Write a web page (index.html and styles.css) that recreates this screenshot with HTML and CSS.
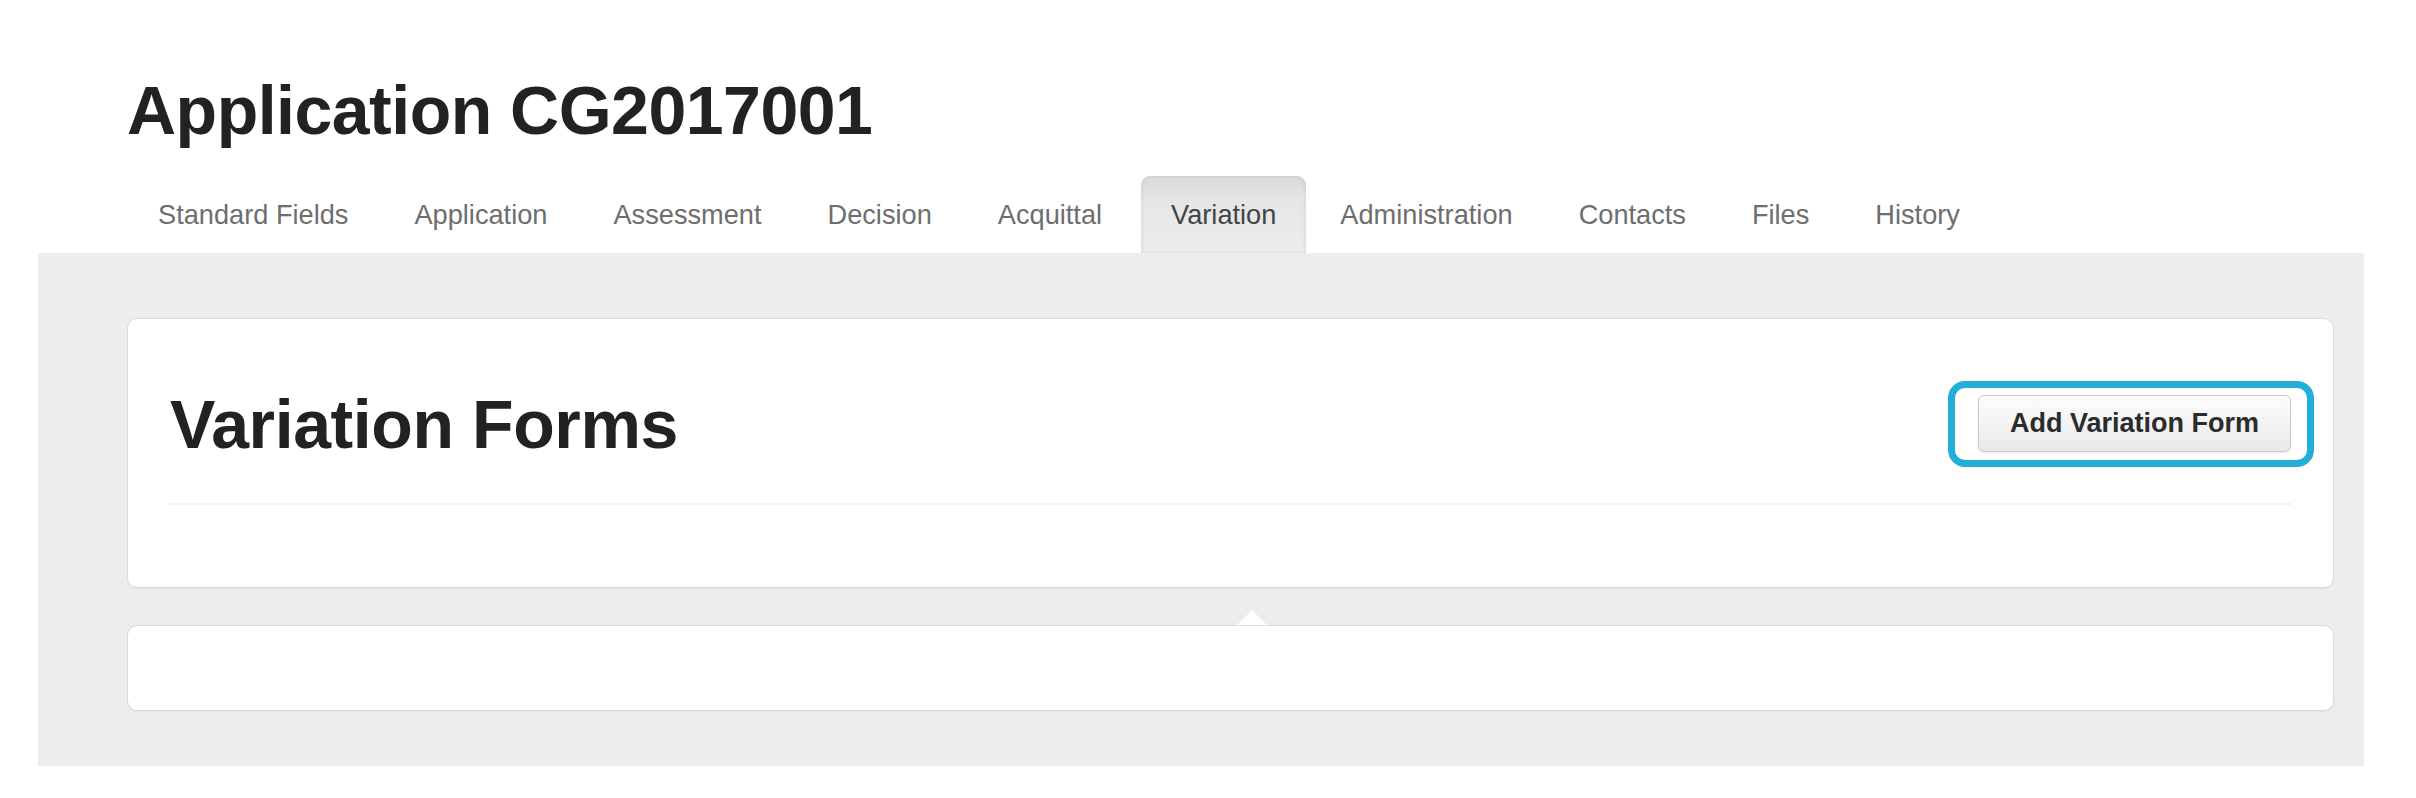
FILE: index.html
```html
<!DOCTYPE html>
<html lang="en">
<head>
    <meta charset="UTF-8">
    <meta name="viewport" content="width=device-width, initial-scale=1.0">
    <title>Application CG2017001</title>
    <link rel="stylesheet" href="styles.css">
</head>
<body>
    <div class="wrap">
        <header class="head">
            <h1>Application CG2017001</h1>
        </header>

        <nav class="tabs">
            <a class="tab">Standard Fields</a>
            <a class="tab">Application</a>
            <a class="tab">Assessment</a>
            <a class="tab">Decision</a>
            <a class="tab">Acquittal</a>
            <a class="tab active">Variation</a>
            <a class="tab">Administration</a>
            <a class="tab">Contacts</a>
            <a class="tab">Files</a>
            <a class="tab">History</a>
        </nav>

        <main class="panel">
            <section class="card forms">
                <div class="card-head">
                    <h2>Variation Forms</h2>
                    <div class="btn-wrap">
                        <button class="btn">Add Variation Form</button>
                    </div>
                </div>
                <hr class="divider">
            </section>

            <section class="card detail">
                <span class="pointer"></span>
            </section>
        </main>
    </div>
</body>
</html>
```

FILE: styles.css
```css
body {
    margin: 0;
    background: #fff;
    font-family: "Liberation Sans", Arial, Helvetica, sans-serif;
    color: #222;
}

.wrap {
    margin: 0 52px 34px 38px;
}

.head {
    padding: 76px 0 0 89px;
}

.head h1 {
    margin: 0;
    font-size: 68px;
    line-height: 1;
    font-weight: bold;
    letter-spacing: -0.5px;
    color: #222;
}

/* tab strip */
.tabs {
    display: flex;
    margin-top: 32px;
    padding-left: 90px;
    height: 77px;
}

.tab {
    padding: 0 30px;
    margin-right: 6px;
    font-size: 27.2px;
    line-height: 77px;
    color: #6e6e6e;
    cursor: pointer;
}

.tab.active {
    margin-left: 3px;
    margin-right: 4px;
    color: #444;
    border-radius: 9px 9px 0 0;
    background: linear-gradient(to bottom, #d9d9d9 0%, #e6e6e6 30%, #ececec 100%);
    box-shadow: inset 2px 0 3px rgba(0, 0, 0, 0.05), inset -2px 0 3px rgba(0, 0, 0, 0.05);
}

/* gray area */
.panel {
    background: #ededed;
    padding: 65px 30px 55px 89px;
}

.card {
    position: relative;
    background: #fff;
    border: 1px solid #dadada;
    border-radius: 10px;
    box-shadow: 0 1px 2px rgba(0, 0, 0, 0.04);
}

.forms {
    padding: 71px 42px 82px;
}

.card-head {
    display: flex;
    align-items: center;
    justify-content: space-between;
}

.card-head h2 {
    margin: 0;
    font-size: 68px;
    line-height: 1;
    font-weight: bold;
    letter-spacing: -0.4px;
    color: #222;
}

.btn-wrap {
    position: relative;
    margin-top: -2px;
}

/* highlight ring round the button */
.btn-wrap::after {
    content: "";
    position: absolute;
    top: -14px;
    right: -23px;
    bottom: -15px;
    left: -30px;
    border: 7px solid #22aed6;
    border-radius: 17px;
    pointer-events: none;
}

.btn {
    display: block;
    width: 313px;
    height: 57px;
    padding: 0;
    border: 1px solid #c9c9c9;
    border-radius: 6px;
    background: linear-gradient(to bottom, #fdfdfd 0%, #f1f1f1 60%, #e9e9e9 100%);
    box-shadow: 0 1px 2px rgba(0, 0, 0, 0.08);
    font-family: inherit;
    font-size: 27px;
    font-weight: bold;
    color: #2b2b2b;
    cursor: pointer;
}

.divider {
    margin: 45px 0 0;
    border: 0;
    height: 2px;
    background: #f0f0f0;
}

.detail {
    margin-top: 37px;
    height: 84px;
}

.pointer {
    position: absolute;
    top: -16px;
    left: 1109px;
    width: 0;
    height: 0;
    border-left: 15px solid transparent;
    border-right: 15px solid transparent;
    border-bottom: 15px solid #fff;
}
```
